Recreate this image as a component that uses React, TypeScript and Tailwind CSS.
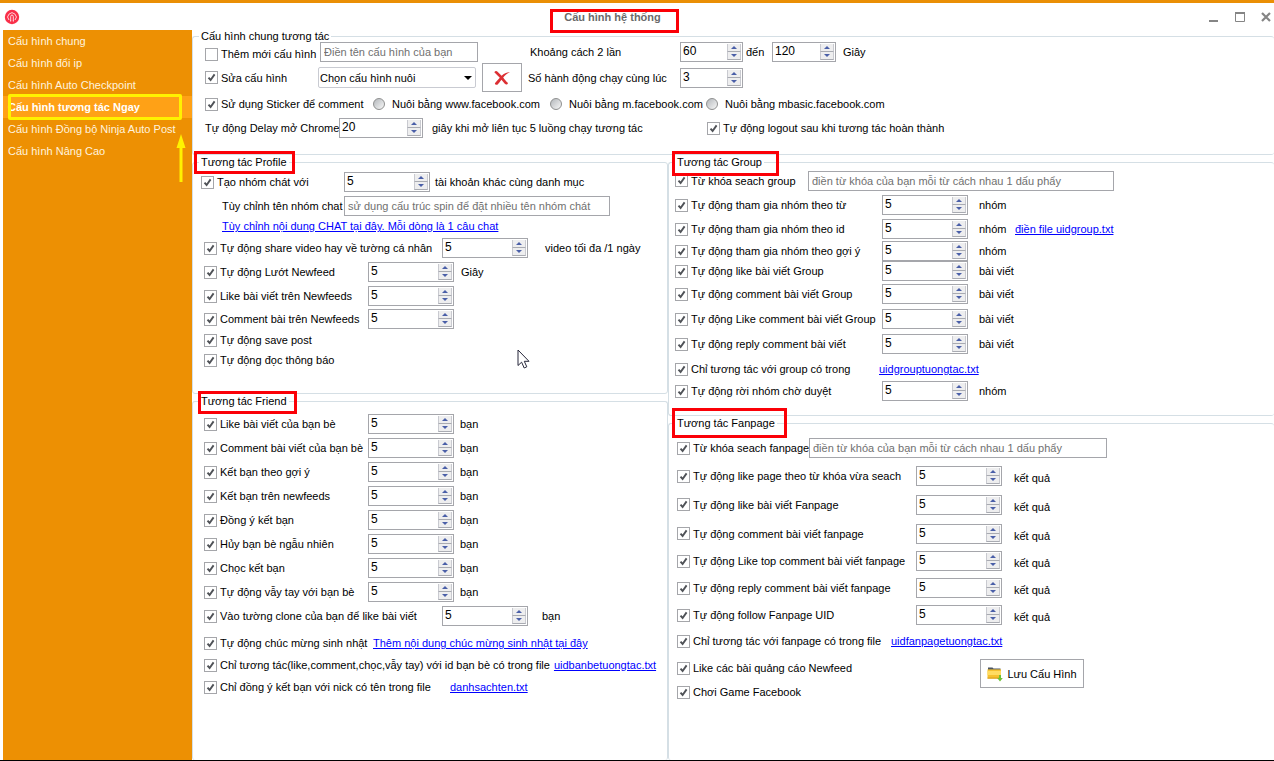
import { useState } from 'react'
import type { ReactNode } from 'react'
import clsx from 'clsx'

const menu = [
  'Cấu hình chung',
  'Cấu hình đổi ip',
  'Cấu hình Auto Checkpoint',
  'Cấu hình tương tác Ngay',
  'Cấu hình Đồng bộ Ninja Auto Post',
  'Cấu hình Nâng Cao',
]

const friendRows = [
  'Like bài viết của bạn bè',
  'Comment bài viết của bạn bè',
  'Kết bạn theo gợi ý',
  'Kết bạn trên newfeeds',
  'Đồng ý kết bạn',
  'Hủy bạn bè ngẫu nhiên',
  'Chọc kết bạn',
  'Tự động vẫy tay với bạn bè',
]

const groupRows = [
  { label: 'Tự động tham gia nhóm theo từ', unit: 'nhóm', height: 'h-6' },
  { label: 'Tự động tham gia nhóm theo id', unit: 'nhóm', height: 'h-6', file: 'điền file uidgroup.txt' },
  { label: 'Tự động tham gia nhóm theo gợi ý', unit: 'nhóm', height: 'h-5' },
  { label: 'Tự động like bài viết Group', unit: 'bài viết', height: 'h-5' },
  { label: 'Tự động comment bài viết Group', unit: 'bài viết', height: 'h-[26px]' },
  { label: 'Tự động Like comment bài viết Group', unit: 'bài viết', height: 'h-6' },
  { label: 'Tự động reply comment bài viết', unit: 'bài viết', height: 'h-[26px]' },
]

const fanpageRows = [
  { label: 'Tự động like page theo từ khóa vừa seach', height: 'h-7' },
  { label: 'Tự động like bài viết Fanpage', height: 'h-[29px]' },
  { label: 'Tự động comment bài viết fanpage', height: 'h-[29px]' },
  { label: 'Tự động Like top comment bài viết fanpage', height: 'h-[26px]' },
  { label: 'Tự động reply comment bài viết fanpage', height: 'h-7' },
  { label: 'Tự động follow Fanpage UID', height: 'h-[26px]' },
]

function Check({ label, className, off }: { label: string; className?: string; off?: boolean }) {
  return (
    <label className={clsx('flex shrink-0 items-center gap-[3px] whitespace-nowrap', className)}>
      <span className="relative block size-[13px] shrink-0">
        <input
          type="checkbox"
          defaultChecked={!off}
          className="peer block size-[13px] appearance-none border border-[#a5a6aa] bg-white"
        />
        <svg
          viewBox="0 0 13 13"
          className="pointer-events-none absolute inset-0 hidden size-[13px] peer-checked:block"
        >
          <path d="M3.5 6.6 5.6 9 9.6 3.4" fill="none" stroke="#4f5257" strokeWidth="1.9" />
        </svg>
      </span>
      {label}
    </label>
  )
}

function Radio({ label }: { label: string }) {
  return (
    <label className="flex shrink-0 items-center gap-[7px] whitespace-nowrap">
      <input
        type="radio"
        name="browser"
        className="size-3 shrink-0 appearance-none rounded-full border border-[#8e8f8f] bg-linear-to-br from-[#b4b8bc] to-[#f8f8f8] checked:from-[#3b5a9a]"
      />
      {label}
    </label>
  )
}

function Spinner({ initial = 5, name, className = 'w-[86px]' }: { initial?: number; name: string; className?: string }) {
  const [value, setValue] = useState(initial)
  const button = 'flex h-2 w-3.5 items-center justify-center border-x border-b border-x-[#c9cad0] border-b-[#a9abb2] bg-[#eeeeef]'

  return (
    <span className={clsx('flex h-5 shrink-0 items-center border border-[#a5a6ab] bg-white pr-px', className)}>
      <input
        type="text"
        inputMode="numeric"
        aria-label={name}
        value={value}
        onChange={(e) => setValue(Number(e.target.value) || 0)}
        className="h-4 w-full min-w-0 pb-0.5 pl-[2px] text-[12px] leading-4 outline-none"
      />
      <span className="flex flex-col">
        <button type="button" aria-label="Tăng" className={button} onClick={() => setValue(value + 1)}>
          <svg viewBox="0 0 6 3" className="h-[3px] w-1.5">
            <path d="M0 3 3 0 6 3Z" fill="#4a5fa8" />
          </svg>
        </button>
        <button type="button" aria-label="Giảm" className={button} onClick={() => setValue(value - 1)}>
          <svg viewBox="0 0 6 3" className="h-[3px] w-1.5">
            <path d="M0 0H6L3 3Z" fill="#4a5fa8" />
          </svg>
        </button>
      </span>
    </span>
  )
}

function TextBox({ placeholder, name, className }: { placeholder: string; name: string; className: string }) {
  return (
    <input
      type="text"
      aria-label={name}
      placeholder={placeholder}
      className={clsx('h-5 shrink-0 border border-[#a5a6ab] bg-white px-[3px] outline-none placeholder:text-[#707070]', className)}
    />
  )
}

function FileLink({ children }: { children: ReactNode }) {
  return (
    <a href="#" className="whitespace-nowrap text-[#0000ff] underline">
      {children}
    </a>
  )
}

function Box({
  title,
  mark,
  className,
  bodyClass,
  children,
}: {
  title: string
  mark?: string
  className?: string
  bodyClass: string
  children: ReactNode
}) {
  return (
    <fieldset className={clsx('min-w-0 rounded-[3px] border border-[#d5dfe5]', className)}>
      <legend className="relative ml-1.5 h-3 px-0.5 leading-3">
        {title}
        {mark && <span className={clsx('pointer-events-none absolute z-10 border-3 border-[#fb0007]', mark)} />}
      </legend>
      <div className={bodyClass}>{children}</div>
    </fieldset>
  )
}

function TitleBar() {
  return (
    <header className="flex h-[30px] items-center border-t-3 border-[#ea8f05] bg-white">
      <div className="flex-1 pl-1">
        <svg viewBox="0 0 16 16" className="size-4">
          <circle cx="8" cy="8" r="7.2" fill="#f92f49" />
          <path
            d="M5 11A4.2 4.2 0 1 1 11 11M6.7 12V7.6A1.3 1.6 0 0 1 9.3 7.6V12M6 12H7.2M8.8 12H10"
            fill="none"
            stroke="#fff"
            strokeWidth="0.8"
          />
        </svg>
      </div>
      <h1 className="relative mr-[50px] font-bold text-[#6a6a6a]">
        Cấu hình hệ thống
        <span className="pointer-events-none absolute top-0 -right-[18px] -bottom-2 -left-3.5 border-3 border-[#fb0007]" />
      </h1>
      <div className="flex flex-1 items-center justify-end gap-4 pr-[3px] text-[#858585]">
        <button type="button" aria-label="Thu nhỏ">
          <svg viewBox="0 0 10 10" className="size-2.5">
            <path d="M0 9H9" stroke="currentColor" strokeWidth="2" />
          </svg>
        </button>
        <button type="button" aria-label="Phóng to">
          <svg viewBox="0 0 10 10" className="size-2.5">
            <path d="M0.5 1V9.5H9.5V1M0 1.5H10" fill="none" stroke="currentColor" />
            <path d="M0 1H10" stroke="currentColor" strokeWidth="2" />
          </svg>
        </button>
        <button type="button" aria-label="Đóng">
          <svg viewBox="0 0 10 10" className="size-2.5">
            <path d="M1 1 9 9M9 1 1 9" stroke="currentColor" strokeWidth="2.2" />
          </svg>
        </button>
      </div>
    </header>
  )
}

function Sidebar() {
  return (
    <nav className="relative w-[189px] shrink-0 bg-[#ed9003] text-[#fff3df]">
      {menu.map((item, i) => (
        <a
          key={item}
          href="#"
          className={clsx(
            'relative flex h-[22px] items-center pl-[5px] whitespace-nowrap',
            i === 3 && 'bg-[#ffa116] font-bold text-white'
          )}
        >
          {item}
          {i === 3 && (
            <span className="pointer-events-none absolute -top-0.5 right-2.5 -bottom-0.5 left-[5px] rounded-xs border-3 border-[#fff200]" />
          )}
        </a>
      ))}
      {/* Arrow pointing at the active entry */}
      <svg viewBox="0 0 10 50" className="pointer-events-none absolute top-[103px] right-1.5 h-[50px] w-2.5">
        <path d="M5 1 9.5 15H6.5V49H3.5V15H0.5Z" fill="#fff200" />
      </svg>
    </nav>
  )
}

function GeneralBox() {
  return (
    <Box title="Cấu hình chung tương tác" className="border-r-0" bodyClass="pb-3.5 pl-3">
      <div className="grid grid-cols-[323px_152px_1fr] items-center gap-y-px">
        <div className="flex h-5 items-center">
          <Check label="Thêm mới cấu hình" off className="w-[115px] pt-1" />
          <TextBox name="Tên cấu hình" placeholder="Điền tên cấu hình của bạn" className="w-[158px]" />
        </div>
        <span className="pl-0.5">Khoảng cách 2 lần</span>
        <div className="flex items-center">
          <Spinner name="Khoảng cách từ" initial={60} className="w-[63px]" />
          <span className="w-[29px] pl-[3px]">đến</span>
          <Spinner name="Khoảng cách đến" initial={120} className="w-16" />
          <span className="pl-[7px]">Giây</span>
        </div>

        <div className="flex h-[29px] items-center">
          <Check label="Sửa cấu hình" className="w-[113px]" />
          <span className="relative mr-1.5">
            <select
              aria-label="Chọn cấu hình nuôi"
              className="block h-[21px] w-[158px] appearance-none rounded-xs border border-[#c9cbd2] bg-white pl-px outline-none"
            >
              <option>Chọn cấu hình nuôi</option>
            </select>
            <svg viewBox="0 0 8 4" className="pointer-events-none absolute top-[9px] right-1 h-1 w-2">
              <path d="M0 0H8L4 4Z" fill="#000" />
            </svg>
          </span>
          <button
            type="button"
            aria-label="Xóa cấu hình"
            className="flex h-[29px] w-10 items-center justify-center border border-[#a5a6ab] bg-white"
          >
            <svg viewBox="0 0 16 16" className="size-4">
              <path
                d="M0.3 2.2C1.4 0.4 2.8 0.8 3.8 2L7.6 5.8C10 3.4 13 2 15.9 2.2C13 3.4 10.8 5.2 9.2 7.6C10.6 9.6 12 11.4 14 13C13.4 14.8 12 15 10.8 13.8L7.4 9.8C6 11.6 4.8 13.4 3.4 14.8C2 15 0.8 14.4 0.9 13.2C2.4 11.4 4 9.4 5.8 7.8Z"
                fill="#dc2f33"
              />
            </svg>
          </button>
        </div>
        <span className="whitespace-nowrap">Số hành động chạy cùng lúc</span>
        <Spinner name="Số hành động chạy cùng lúc" initial={3} className="w-[63px]" />
      </div>

      <div className="flex h-6 items-center">
        <Check label="Sử dụng Sticker để comment" className="w-[168px]" />
        <div className="grid grid-cols-[177px_156px_1fr] items-center">
          <Radio label="Nuôi bằng www.facebook.com" />
          <Radio label="Nuôi bằng m.facebook.com" />
          <Radio label="Nuôi bằng mbasic.facebook.com" />
        </div>
      </div>

      <div className="flex h-6 items-center whitespace-nowrap">
        <span className="w-[134px]">Tự động Delay mở Chrome</span>
        <Spinner name="Tự động Delay mở Chrome" initial={20} className="w-[84px]" />
        <span className="w-[284px] pl-[9px]">giây khi mở liên tục 5 luồng chạy tương tác</span>
        <Check label="Tự động logout sau khi tương tác hoàn thành" />
      </div>
    </Box>
  )
}

function ProfileBox() {
  return (
    <Box
      title="Tương tác Profile"
      mark="-top-[5px] -bottom-[6px] -left-[5px] w-[101px]"
      className="relative"
      bodyClass="pb-[23px] pl-2"
    >
      <div className="flex h-7 items-center">
        <Check label="Tạo nhóm chát với" className="w-[143px]" />
        <Spinner name="Tạo nhóm chát với" />
        <span className="pl-[5px]">tài khoản khác cùng danh mục</span>
      </div>
      <div className="flex h-5 items-center pl-[21px]">
        <span className="w-[122px] whitespace-nowrap">Tùy chỉnh tên nhóm chat</span>
        <TextBox name="Tùy chỉnh tên nhóm chat" placeholder="sử dụng cấu trúc spin để đặt nhiều tên nhóm chát" className="w-[266px]" />
      </div>
      <div className="flex h-5 items-center pl-[21px]">
        <FileLink>Tùy chỉnh nội dung CHAT tại đây. Mỗi dòng là 1 câu chat</FileLink>
      </div>
      <div className="pl-[3px]">
        <div className="flex h-6 items-center">
          <Check label="Tự động share video hay về tường cá nhân" className="w-[238px]" />
          <Spinner name="Tự động share video" />
          <span className="pl-[17px]">video tối đa /1 ngày</span>
        </div>
        <div className="flex h-6 items-center">
          <Check label="Tự động Lướt Newfeed" className="w-[164px]" />
          <Spinner name="Tự động Lướt Newfeed" />
          <span className="pl-[7px]">Giây</span>
        </div>
        <div className="flex h-6 items-center">
          <Check label="Like bài viết trên Newfeeds" className="w-[164px]" />
          <Spinner name="Like bài viết trên Newfeeds" />
        </div>
        <div className="flex h-[22px] items-center">
          <Check label="Comment bài trên Newfeeds" className="w-[164px]" />
          <Spinner name="Comment bài trên Newfeeds" />
        </div>
        <Check label="Tự động save post" className="h-5" />
        <Check label="Tự động đọc thông báo" className="h-5" />
      </div>
      {/* Mouse pointer */}
      <svg viewBox="0 0 13 20" className="pointer-events-none absolute top-[181px] left-[324px] h-5 w-[13px]">
        <path
          d="M1 1V16.5L4.6 13.2 7.2 19 9.8 17.8 7.3 12.3H12Z"
          fill="#fff"
          stroke="#26273a"
          strokeLinejoin="round"
        />
      </svg>
    </Box>
  )
}

function FriendBox() {
  return (
    <Box
      title="Tương tác Friend"
      mark="-top-[4px] -bottom-[7px] -left-px w-[99px]"
      className="flex-1 border-b-0"
      bodyClass="pt-[5px] pl-[11px]"
    >
      {friendRows.map((label) => (
        <div key={label} className="flex h-6 items-center">
          <Check label={label} className="w-[164px]" />
          <Spinner name={label} />
          <span className="pl-1.5">bạn</span>
        </div>
      ))}
      <div className="flex h-6 items-center">
        <Check label="Vào tường clone của bạn để like bài viết" className="w-[238px]" />
        <Spinner name="Vào tường clone của bạn" />
        <span className="pl-3.5">bạn</span>
      </div>
      <div className="mt-1 flex h-[22px] items-center">
        <Check label="Tự động chúc mừng sinh nhật" className="w-[169px]" />
        <FileLink>Thêm nội dung chúc mừng sinh nhật tại đây</FileLink>
      </div>
      <div className="flex h-[22px] items-center">
        <Check label="Chỉ tương tác(like,comment,chọc,vẫy tay) với id bạn bè có trong file" className="min-w-[348px] pr-1" />
        <FileLink>uidbanbetuongtac.txt</FileLink>
      </div>
      <div className="flex h-[22px] items-center">
        <Check label="Chỉ đồng ý kết bạn với nick có tên trong file" className="w-[246px]" />
        <FileLink>danhsachten.txt</FileLink>
      </div>
    </Box>
  )
}

function GroupBox() {
  return (
    <Box
      title="Tương tác Group"
      mark="-top-[5px] -bottom-[8px] -left-[3px] w-[107px]"
      className="border-r-0"
      bodyClass="pb-3.5 pl-1.5"
    >
      <div className="flex h-[25px] items-center">
        <Check label="Từ khóa seach group" className="w-[133px]" />
        <TextBox name="Từ khóa seach group" placeholder="điền từ khóa của bạn mỗi từ cách nhau 1 dấu phẩy" className="w-[306px]" />
      </div>
      {groupRows.map((row) => (
        <div key={row.label} className={clsx('flex items-center', row.height)}>
          <Check label={row.label} className="w-[207px]" />
          <Spinner name={row.label} />
          <span className="w-[47px] pl-[11px] whitespace-nowrap">{row.unit}</span>
          {row.file && <FileLink>{row.file}</FileLink>}
        </div>
      ))}
      <div className="flex h-6 items-center">
        <Check label="Chỉ tương tác với group có trong" className="w-[204px]" />
        <FileLink>uidgrouptuongtac.txt</FileLink>
      </div>
      <div className="flex h-5 items-center">
        <Check label="Tự động rời nhóm chờ duyệt" className="w-[207px]" />
        <Spinner name="Tự động rời nhóm chờ duyệt" />
        <span className="pl-[11px]">nhóm</span>
      </div>
    </Box>
  )
}

function FanpageBox() {
  return (
    <Box
      title="Tương tác Fanpage"
      mark="-top-[9px] -bottom-[9px] -left-[3px] w-[115px]"
      className="flex-1 border-r-0 border-b-0"
      bodyClass="pt-[5px] pl-2"
    >
      <div className="flex h-7 items-center">
        <Check label="Từ khóa seach fanpage" className="w-[132px]" />
        <TextBox name="Từ khóa seach fanpage" placeholder="điền từ khóa của bạn mỗi từ cách nhau 1 dấu phẩy" className="w-[298px]" />
      </div>
      {fanpageRows.map((row) => (
        <div key={row.label} className={clsx('flex items-center', row.height)}>
          <Check label={row.label} className="w-[239px]" />
          <Spinner name={row.label} />
          <span className="pt-1 pl-3">kết quả</span>
        </div>
      ))}
      <div className="flex h-[26px] items-center">
        <Check label="Chỉ tương tác với fanpage có trong file" className="w-[214px]" />
        <FileLink>uidfanpagetuongtac.txt</FileLink>
      </div>
      <div className="flex">
        <div className="w-[303px]">
          <Check label="Like các bài quảng cáo Newfeed" className="h-7" />
          <Check label="Chơi Game Facebook" className="h-5" />
        </div>
        <button
          type="button"
          className="mt-[5px] flex h-[29px] w-[104px] items-center justify-center gap-1 border border-[#a5a6ab] bg-white whitespace-nowrap"
        >
          <svg viewBox="0 0 16 16" className="size-4 shrink-0">
            <path d="M1 3V1.6H5.5L6.5 2.4H13.5V5H1Z" fill="#4c5560" />
            <path d="M0.5 3.4H14V12.5H0.5Z" fill="#f6c12f" />
            <path d="M0.5 5H14V9H0.5Z" fill="#ffdc62" />
            <path d="M0.5 11.6H14V12.6H0.5Z" fill="#d79a17" />
            <path d="M12 9H14V12H15.8L13 15.5 10.2 12H12Z" fill="#6fc034" />
          </svg>
          Lưu Cấu Hình
        </button>
      </div>
    </Box>
  )
}

export default function App() {
  return (
    <div className="flex min-h-screen flex-col border-b border-black bg-white font-['Liberation_Sans',Arial,sans-serif] text-[11px] leading-4 text-black">
      <TitleBar />
      <div className="flex flex-1 pl-[3px]">
        <Sidebar />
        <main className="flex min-w-0 flex-1 flex-col gap-px">
          <GeneralBox />
          <div className="grid flex-1 grid-cols-[476px_1fr]">
            <div className="flex flex-col gap-px">
              <ProfileBox />
              <FriendBox />
            </div>
            <div className="flex flex-col gap-px">
              <GroupBox />
              <FanpageBox />
            </div>
          </div>
        </main>
      </div>
    </div>
  )
}
